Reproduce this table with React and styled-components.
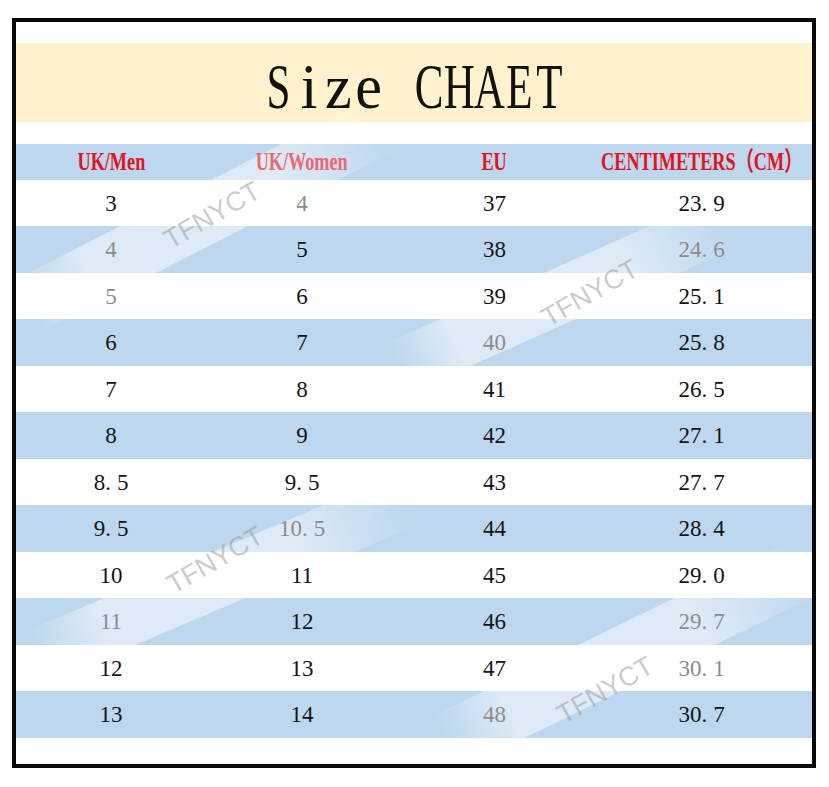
import React from 'react';
import styled, { createGlobalStyle } from 'styled-components';

const GlobalStyle = createGlobalStyle`
  html, body {
    margin: 0;
    padding: 0;
    background: #ffffff;
  }
`;

const rows = [
  { cells: ['3', '4', '37', '23.9'], faded: [1] },
  { cells: ['4', '5', '38', '24.6'], faded: [0, 3] },
  { cells: ['5', '6', '39', '25.1'], faded: [0] },
  { cells: ['6', '7', '40', '25.8'], faded: [2] },
  { cells: ['7', '8', '41', '26.5'], faded: [] },
  { cells: ['8', '9', '42', '27.1'], faded: [] },
  { cells: ['8.5', '9.5', '43', '27.7'], faded: [] },
  { cells: ['9.5', '10.5', '44', '28.4'], faded: [1] },
  { cells: ['10', '11', '45', '29.0'], faded: [] },
  { cells: ['11', '12', '46', '29.7'], faded: [0, 3] },
  { cells: ['12', '13', '47', '30.1'], faded: [3] },
  { cells: ['13', '14', '48', '30.7'], faded: [2] },
];

const headers = [
  { label: 'UK/Men' },
  { label: 'UK/Women', faded: true },
  { label: 'EU' },
  { label: 'CENTIMETERS（CM）' },
];

// light diagonal streaks and the TFNYCT stamps, in sheet coordinates
const bands = [
  { cx: 190, cy: 193, len: 400, angle: -27, thick: 58 },
  { cx: 545, cy: 273, len: 360, angle: -24, thick: 55 },
  { cx: 205, cy: 556, len: 400, angle: -23, thick: 55 },
  { cx: 610, cy: 633, len: 400, angle: -26, thick: 60 },
];

const stamps = [
  { cx: 196, cy: 193 },
  { cx: 574, cy: 271 },
  { cx: 199, cy: 538 },
  { cx: 589, cy: 668 },
];

const Num = ({ value }) => {
  const [whole, frac] = value.split('.');
  if (frac === undefined) return <>{whole}</>;
  return (
    <>
      {whole}
      <Dot>.</Dot>
      {frac}
    </>
  );
};

const title = 'Size CHAET';

const App = () => {
  return (
    <>
      <GlobalStyle />
      <Frame>
        <Sheet>
          <TitleBand>
            <Title aria-label={title}>
              {title.split('').map((ch, i) => (
                <Glyph key={i}>
                  <Letter lower={/[a-z]/.test(ch)}>{ch === ' ' ? '\u00a0' : ch}</Letter>
                </Glyph>
              ))}
            </Title>
          </TitleBand>
          <Table>
            <HeaderRow>
              {headers.map((h) => (
                <Cell key={h.label}>
                  <HeadText faded={h.faded}>{h.label}</HeadText>
                </Cell>
              ))}
            </HeaderRow>
            {rows.map((r, i) => (
              <Row key={i} shaded={i % 2 === 1} tall={i % 2 === 1}>
                {r.cells.map((c, j) => (
                  <Cell key={j}>
                    <Value faded={r.faded.includes(j)}>
                      <Num value={c} />
                    </Value>
                  </Cell>
                ))}
              </Row>
            ))}
          </Table>
          {bands.map((b, i) => (
            <Streak key={i} {...b} />
          ))}
          {stamps.map((s, i) => (
            <Stamp key={i} cx={s.cx} cy={s.cy}>
              TFNYCT
            </Stamp>
          ))}
        </Sheet>
      </Frame>
    </>
  );
};

const Frame = styled.div`
  margin: 18px 0 0 12px;
  width: 796px;
  border: 4px solid #0a0a0a;
  background: #ffffff;
`;

const Sheet = styled.div`
  position: relative;
  z-index: 0;
  height: 742px;
  padding-top: 21px;
  box-sizing: border-box;
  display: flex;
  flex-direction: column;
  overflow: hidden;
`;

const TitleBand = styled.div`
  height: 79px;
  background: #fff2cc;
  display: flex;
  align-items: center;
  justify-content: center;
`;

const Title = styled.h1`
  margin: 8px 0 0 0;
  display: flex;
  font-family: "Liberation Serif", "Times New Roman", serif;
  font-weight: 400;
  font-size: 50px;
  line-height: 1;
  color: #111111;
  transform: scale(0.86, 1.26);
`;

const Glyph = styled.span`
  width: 35px;
  display: flex;
  justify-content: center;
`;

const Letter = styled.span`
  display: inline-block;
  transform: scaleX(${(p) => (p.lower ? 1.4 : 1)});
`;

const Table = styled.div`
  margin-top: 22px;
  display: flex;
  flex-direction: column;
`;

const HeaderRow = styled.div`
  height: 36px;
  background: #bdd7ee;
  display: grid;
  grid-template-columns: 190px 192px 193px minmax(0, 1fr);
`;

const Row = styled.div`
  height: ${(p) => (p.tall ? 47 : 46)}px;
  background: ${(p) => (p.shaded ? '#bdd7ee' : '#ffffff')};
  display: grid;
  grid-template-columns: 190px 192px 193px minmax(0, 1fr);
`;

const Cell = styled.div`
  min-width: 0;
  display: flex;
  align-items: center;
  justify-content: center;
`;

const HeadText = styled.span`
  position: relative;
  z-index: 2;
  flex-shrink: 0;
  display: inline-block;
  white-space: nowrap;
  font-family: "Liberation Serif", "Noto Sans CJK SC", serif;
  font-weight: 700;
  font-size: 26px;
  line-height: 1;
  color: ${(p) => (p.faded ? '#ee6673' : '#e3121d')};
  transform: scaleX(0.7);
`;

const Value = styled.span`
  position: relative;
  z-index: 2;
  font-family: "Liberation Serif", "Times New Roman", serif;
  font-size: 23px;
  line-height: 1;
  color: ${(p) => (p.faded ? '#8c8c8c' : '#141414')};
`;

const Dot = styled.span`
  margin-right: 6px;
`;

const Streak = styled.div`
  position: absolute;
  z-index: 1;
  pointer-events: none;
  left: ${(p) => p.cx - p.len / 2}px;
  top: ${(p) => p.cy - p.thick / 2}px;
  width: ${(p) => p.len}px;
  height: ${(p) => p.thick}px;
  transform: rotate(${(p) => p.angle}deg);
  background: linear-gradient(
    90deg,
    rgba(255, 255, 255, 0) 0%,
    rgba(255, 255, 255, 0.5) 18%,
    rgba(255, 255, 255, 0.5) 70%,
    rgba(255, 255, 255, 0) 100%
  );
`;

const Stamp = styled.div`
  position: absolute;
  z-index: 3;
  pointer-events: none;
  left: ${(p) => p.cx - 60}px;
  top: ${(p) => p.cy - 16}px;
  width: 120px;
  height: 32px;
  text-align: center;
  font-family: "Liberation Sans", Arial, sans-serif;
  font-size: 27px;
  line-height: 32px;
  color: rgba(140, 140, 140, 0.45);
  transform: rotate(-30deg);
`;

export default App;
